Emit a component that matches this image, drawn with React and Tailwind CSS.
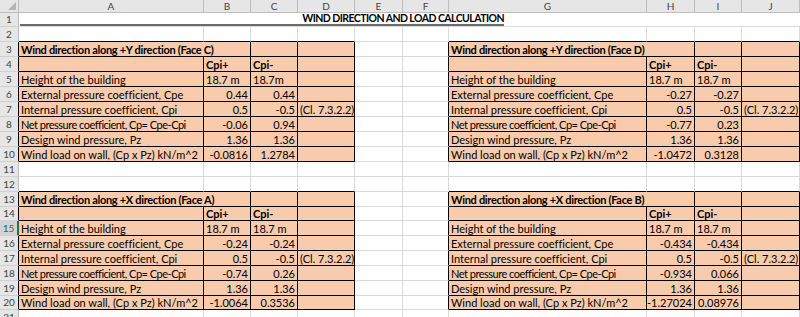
import clsx from "clsx";

// Column widths A..J (px as Tailwind classes)
const COL_W = ["w-[185px]", "w-[47px]", "w-[47px]", "w-[57px]", "w-[48px]", "w-[46px]", "w-[198px]", "w-[48px]", "w-[47px]", "w-[58px]"];
const SPAN_W = { 0: "w-[232px]", 6: "w-[246px]" }; // merged title cells A:B and G:H
const LETTERS = ["A", "B", "C", "D", "E", "F", "G", "H", "I", "J"];
// Row heights for rows 1..21
const ROW_H = [
  "h-[14px]", "h-[15px]", "h-[15px]", "h-[15px]", "h-[15px]", "h-[15px]", "h-[15px]",
  "h-[15px]", "h-[15px]", "h-[15px]", "h-[15px]", "h-[15px]", "h-[15px]", "h-[14px]",
  "h-[15px]", "h-[15px]", "h-[15px]", "h-[15px]", "h-[15px]", "h-[14px]", "h-[15px]",
];

const TABLES = [
  { row: 2, col: 0, title: "Wind direction along +Y direction (Face C)", h2: "18.7m",
    v: [["0.44", "0.44"], ["0.5", "-0.5"], ["-0.06", "0.94"], ["1.36", "1.36"], ["-0.0816", "1.2784"]] },
  { row: 2, col: 6, title: "Wind direction along +Y direction (Face D)", h2: "18.7 m",
    v: [["-0.27", "-0.27"], ["0.5", "-0.5"], ["-0.77", "0.23"], ["1.36", "1.36"], ["-1.0472", "0.3128"]] },
  { row: 12, col: 0, title: "Wind direction along +X direction (Face A)", h2: "18.7 m",
    v: [["-0.24", "-0.24"], ["0.5", "-0.5"], ["-0.74", "0.26"], ["1.36", "1.36"], ["-1.0064", "0.3536"]] },
  { row: 12, col: 6, title: "Wind direction along +X direction (Face B)", h2: "18.7 m",
    v: [["-0.434", "-0.434"], ["0.5", "-0.5"], ["-0.934", "0.066"], ["1.36", "1.36"], ["-1.27024", "0.08976"]] },
];

const LABELS = [
  "External pressure coefficient, Cpe",
  "Internal pressure coefficient, Cpi",
  "Net pressure coefficient, Cp= Cpe-Cpi",
  "Design wind pressure, Pz",
  "Wind load on wall, (Cp x Pz) kN/m^2",
];

function buildGrid() {
  const g = Array.from({ length: 21 }, () => Array.from({ length: 10 }, () => ({})));
  TABLES.forEach(({ row, col, title, h2, v }) => {
    for (let r = row; r < row + 8; r++)
      for (let c = col; c < col + 4; c++) g[r][c] = { fill: true };
    g[row][col] = { fill: true, t: title, b: true, span: 2, tight: "title" };
    g[row][col + 1] = { fill: true, skip: true };
    g[row + 1][col + 1] = { fill: true, t: "Cpi+", b: true };
    g[row + 1][col + 2] = { fill: true, t: "Cpi-", b: true };
    g[row + 2][col] = { fill: true, t: "Height of the building" };
    g[row + 2][col + 1] = { fill: true, t: "18.7 m" };
    g[row + 2][col + 2] = { fill: true, t: h2 };
    v.forEach((pair, i) => {
      g[row + 3 + i][col] = { fill: true, t: LABELS[i], tight: i === 2 ? "net" : null };
      g[row + 3 + i][col + 1] = { fill: true, t: pair[0], r: true };
      g[row + 3 + i][col + 2] = { fill: true, t: pair[1], r: true };
    });
    g[row + 4][col + 3] = { fill: true, t: "(Cl. 7.3.2.2)" };
  });
  return g;
}

const grid = buildGrid();
const isFill = (r, c) => !!grid[r]?.[c]?.fill;

function RowHead({ n, h, black }) {
  const active = n === 15;
  return (
    <div
      className={clsx(
        "w-[19px] shrink-0 box-border flex items-center justify-center border-b border-b-[#d0d0d0] text-[10px]",
        h,
        active ? "bg-[#d3d3d3] text-[#217346] border-r-2 border-r-[#217346]" : "bg-[#e6e6e6] text-[#444] border-r",
        !active && (black ? "border-r-black" : "border-r-[#bdbdbd]")
      )}
    >
      {n}
    </div>
  );
}

function Cell({ cell, r, c }) {
  const span = cell.span || 1;
  const rightBlack = cell.fill || isFill(r, c + span);
  const bottomBlack = cell.fill || isFill(r + 1, c);
  return (
    <div
      className={clsx(
        "shrink-0 box-border flex items-center overflow-hidden whitespace-nowrap px-[2px] border-r border-b leading-none",
        span === 2 ? SPAN_W[c] : COL_W[c],
        ROW_H[r],
        cell.fill ? "bg-[#f8cbad]" : "bg-white",
        rightBlack ? "border-r-black" : "border-r-[#d9d9d9]",
        bottomBlack ? "border-b-black" : "border-b-[#d9d9d9]",
        cell.r ? "justify-end" : "justify-start",
        cell.b && "font-bold",
        cell.tight === "title" && "tracking-[-0.3px]",
        cell.tight === "net" && "tracking-[-0.5px]"
      )}
    >
      {cell.t}
    </div>
  );
}

export default function App() {
  return (
    <div className="w-[800px] h-[317px] overflow-hidden bg-white text-black text-[11px] font-['Lato','Open_Sans',sans-serif] [font-variant-ligatures:none]">
      {/* column headers */}
      <div className="flex h-[13px]">
        <div className="w-[19px] shrink-0 box-border relative bg-[#e6e6e6] border-r border-b border-[#bdbdbd]">
          <div className="absolute right-[2px] bottom-[2px] w-0 h-0 border-l-[8px] border-l-transparent border-b-[8px] border-b-[#b4b4b4]" />
        </div>
        {LETTERS.map((l, i) => (
          <div
            key={l}
            className={clsx(
              "shrink-0 box-border flex items-center justify-center bg-[#e6e6e6] border-r border-b border-[#bdbdbd] text-[10px] text-[#444]",
              COL_W[i]
            )}
          >
            {l}
          </div>
        ))}
      </div>

      {/* row 1: title */}
      <div className="flex">
        <RowHead n={1} h={ROW_H[0]} />
        <div className="w-[781px] shrink-0 box-border h-[14px] border-b border-b-[#d9d9d9] pl-px">
          <div className="w-[484px] h-[13px] border-b-2 border-b-[#6b6b6b] flex items-center justify-end font-bold leading-none text-[10.5px] tracking-[-0.55px]">
            WIND DIRECTION AND LOAD CALCULATION
          </div>
        </div>
      </div>

      {grid.slice(1).map((row, k) => {
        const r = k + 1;
        return (
          <div key={r} className="flex">
            <RowHead n={r + 1} h={ROW_H[r]} black={isFill(r, 0)} />
            {row.map((cell, c) => (cell.skip ? null : <Cell key={c} cell={cell} r={r} c={c} />))}
          </div>
        );
      })}
    </div>
  );
}
